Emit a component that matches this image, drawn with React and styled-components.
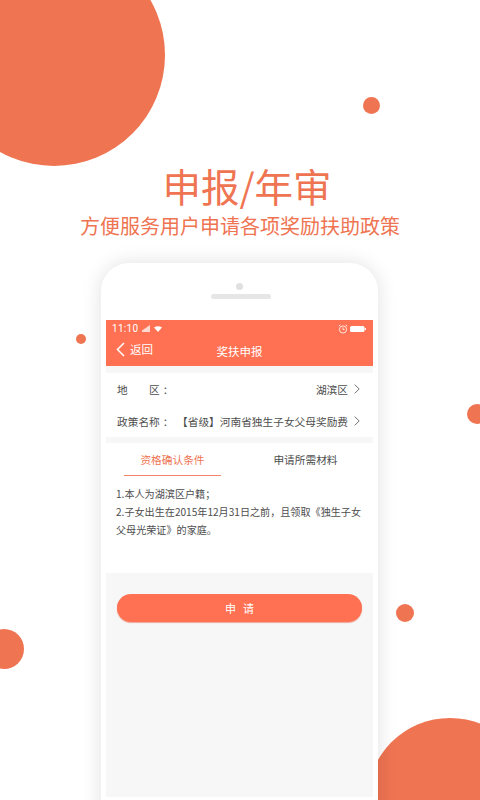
import React from 'react';
import styled, { createGlobalStyle } from 'styled-components';

const CJK = `"Noto Sans CJK SC", "Noto Sans", sans-serif`;

const GlobalStyle = createGlobalStyle`
  html, body {
    margin: 0;
    padding: 0;
    background: #fff;
  }
  * {
    box-sizing: border-box;
  }
`;

const Page = styled.div`
  position: relative;
  width: 480px;
  height: 800px;
  overflow: hidden;
  background: #fff;
  font-family: ${CJK};
  padding-top: 161px;
  display: flex;
  flex-direction: column;
  align-items: center;
`;

const Circle = styled.div`
  position: absolute;
  left: ${p => p.$x - p.$r}px;
  top: ${p => p.$y - p.$r}px;
  width: ${p => p.$r * 2}px;
  height: ${p => p.$r * 2}px;
  border-radius: 50%;
  background: #ef7452;
`;

const Title = styled.h1`
  margin: 0 0 0 14px;
  font-size: 38.5px;
  line-height: 48px;
  font-weight: 400;
  color: #ef7452;
`;

const Subtitle = styled.p`
  margin: 2px 0 0;
  font-size: 20px;
  line-height: 29px;
  font-weight: 400;
  color: #ef7452;
  white-space: nowrap;
`;

const Phone = styled.div`
  position: relative;
  width: 277px;
  height: 560px;
  margin: 23px 0 0 -1px;
  padding: 57px 5px 0;
  background: #fff;
  border-radius: 28px 28px 0 0;
  box-shadow: 0 0 20px rgba(0, 0, 0, 0.12);
  flex-shrink: 0;
`;

const Camera = styled.div`
  position: absolute;
  top: 20px;
  left: 135px;
  width: 7px;
  height: 7px;
  border-radius: 50%;
  background: #e0e0e0;
`;

const Speaker = styled.div`
  position: absolute;
  top: 31px;
  left: 110px;
  width: 60px;
  height: 5px;
  border-radius: 3px;
  background: #e6e6e6;
`;

const Screen = styled.div`
  height: 477px;
  background: #f7f7f7;
  display: flex;
  flex-direction: column;
`;

const Header = styled.div`
  background: #ff7152;
  color: #fff;
  height: 46px;
`;

const StatusBar = styled.div`
  height: 17px;
  padding: 0 7px 0 6px;
  display: flex;
  align-items: center;
  gap: 4px;
  font-family: Roboto, sans-serif;
  font-size: 10px;
  letter-spacing: 0.3px;
`;

const StatusRight = styled.div`
  margin-left: auto;
  display: flex;
  align-items: center;
  gap: 2px;
`;

const NavBar = styled.div`
  position: relative;
  height: 27px;
  display: flex;
  align-items: center;
  justify-content: center;
  font-size: 11.5px;
`;

const Back = styled.div`
  position: absolute;
  left: 10px;
  top: 4px;
  display: flex;
  align-items: center;
  gap: 5px;
`;

const Card = styled.div`
  background: #fff;
  margin-top: ${p => p.$top}px;
`;

const Row = styled.div`
  height: 32px;
  padding: 0 13px 0 11px;
  display: flex;
  align-items: center;
  font-size: 10.7px;
  color: #4d4d4d;
  white-space: nowrap;
`;

const Label = styled.span`
  width: ${p => p.$w}px;
  flex-shrink: 0;
`;

const Colon = styled.span`
  margin-left: 3px;
`;

const Value = styled.span`
  margin-left: auto;
`;

const Arrow = styled.svg`
  margin-left: 6px;
  flex-shrink: 0;
`;

const Tabs = styled.div`
  height: 33px;
  display: grid;
  grid-template-columns: 97px 97px;
  column-gap: 36px;
  padding-left: 18px;
`;

const Tab = styled.div`
  display: flex;
  align-items: center;
  justify-content: center;
  font-size: 10.7px;
  color: ${p => (p.$active ? '#ef7452' : '#4d4d4d')};
  border-bottom: 1px solid ${p => (p.$active ? '#f4846a' : 'transparent')};
`;

const Rules = styled.div`
  height: 97px;
  padding: 9px 8px 0 10px;
  font-size: 10.1px;
  line-height: 18px;
  color: #4d4d4d;
`;

const ApplyButton = styled.button`
  align-self: center;
  margin-top: 21px;
  width: 245px;
  height: 28px;
  border: none;
  border-radius: 14px;
  background: #ff7152;
  box-shadow: 0 1px 1px rgba(226, 90, 60, 0.5);
  color: #fff;
  font-family: ${CJK};
  font-size: 11px;
  letter-spacing: 7px;
  text-indent: 7px;
  padding: 0;
`;

const Chevron = () => (
  <Arrow width="6" height="10" viewBox="0 0 6 10" fill="none" stroke="#666" strokeWidth="0.9">
    <path d="M0.6 0.6L5.2 5L0.6 9.4" />
  </Arrow>
);

export default function App() {
  return (
    <Page>
      <GlobalStyle />
      <Circle $x={54} $y={55} $r={111} />
      <Circle $x={371} $y={105} $r={8.5} />
      <Circle $x={81} $y={339} $r={5} />
      <Circle $x={477} $y={414} $r={10} />
      <Circle $x={405} $y={613} $r={9} />
      <Circle $x={4} $y={649} $r={20} />
      <Circle $x={450} $y={801} $r={83} />

      <Title>申报/年审</Title>
      <Subtitle>方便服务用户申请各项奖励扶助政策</Subtitle>

      <Phone>
        <Camera />
        <Speaker />
        <Screen>
          <Header>
            <StatusBar>
              <span>11:10</span>
              <svg width="8" height="7" viewBox="0 0 8 7" fill="#ffd9cf">
                <path d="M0 7V5.5L8 0V7z" />
              </svg>
              <svg width="8" height="6" viewBox="0 0 8 6" fill="#fff">
                <path d="M0 1.5Q4 -1 8 1.5L4 6z" />
              </svg>
              <StatusRight>
                <svg width="10" height="10" viewBox="0 0 10 10" fill="none" stroke="#ffe6df" strokeWidth="1">
                  <circle cx="5" cy="5.5" r="3.6" />
                  <path d="M5 3.5V5.6H6.6M0.8 2.2L2.4 0.8M9.2 2.2L7.6 0.8" />
                </svg>
                <svg width="16" height="6" viewBox="0 0 16 6" fill="#fff">
                  <rect width="14.5" height="6" rx="1.5" />
                  <rect x="14.8" y="2" width="1.2" height="2" />
                </svg>
              </StatusRight>
            </StatusBar>
            <NavBar>
              <Back>
                <svg width="9" height="15" viewBox="0 0 9 15" fill="none" stroke="#fff" strokeWidth="1.5">
                  <path d="M8 1L1.5 7.5L8 14" />
                </svg>
                <span>返回</span>
              </Back>
              <span>奖扶申报</span>
            </NavBar>
          </Header>

          <Card $top={7}>
            <Row>
              <Label $w={60}>地　　区<Colon>：</Colon></Label>
              <Value>湖滨区</Value>
              <Chevron />
            </Row>
            <Row>
              <Label $w={60}>政策名称<Colon>：</Colon></Label>
              <Value>【省级】河南省独生子女父母奖励费</Value>
              <Chevron />
            </Row>
          </Card>

          <Card $top={6}>
            <Tabs>
              <Tab $active>资格确认条件</Tab>
              <Tab>申请所需材料</Tab>
            </Tabs>
            <Rules>
              1.本人为湖滨区户籍；
              <br />
              2.子女出生在2015年12月31日之前，且领取《独生子女父母光荣证》的家庭。
            </Rules>
          </Card>

          <ApplyButton>申请</ApplyButton>
        </Screen>
      </Phone>
    </Page>
  );
}
